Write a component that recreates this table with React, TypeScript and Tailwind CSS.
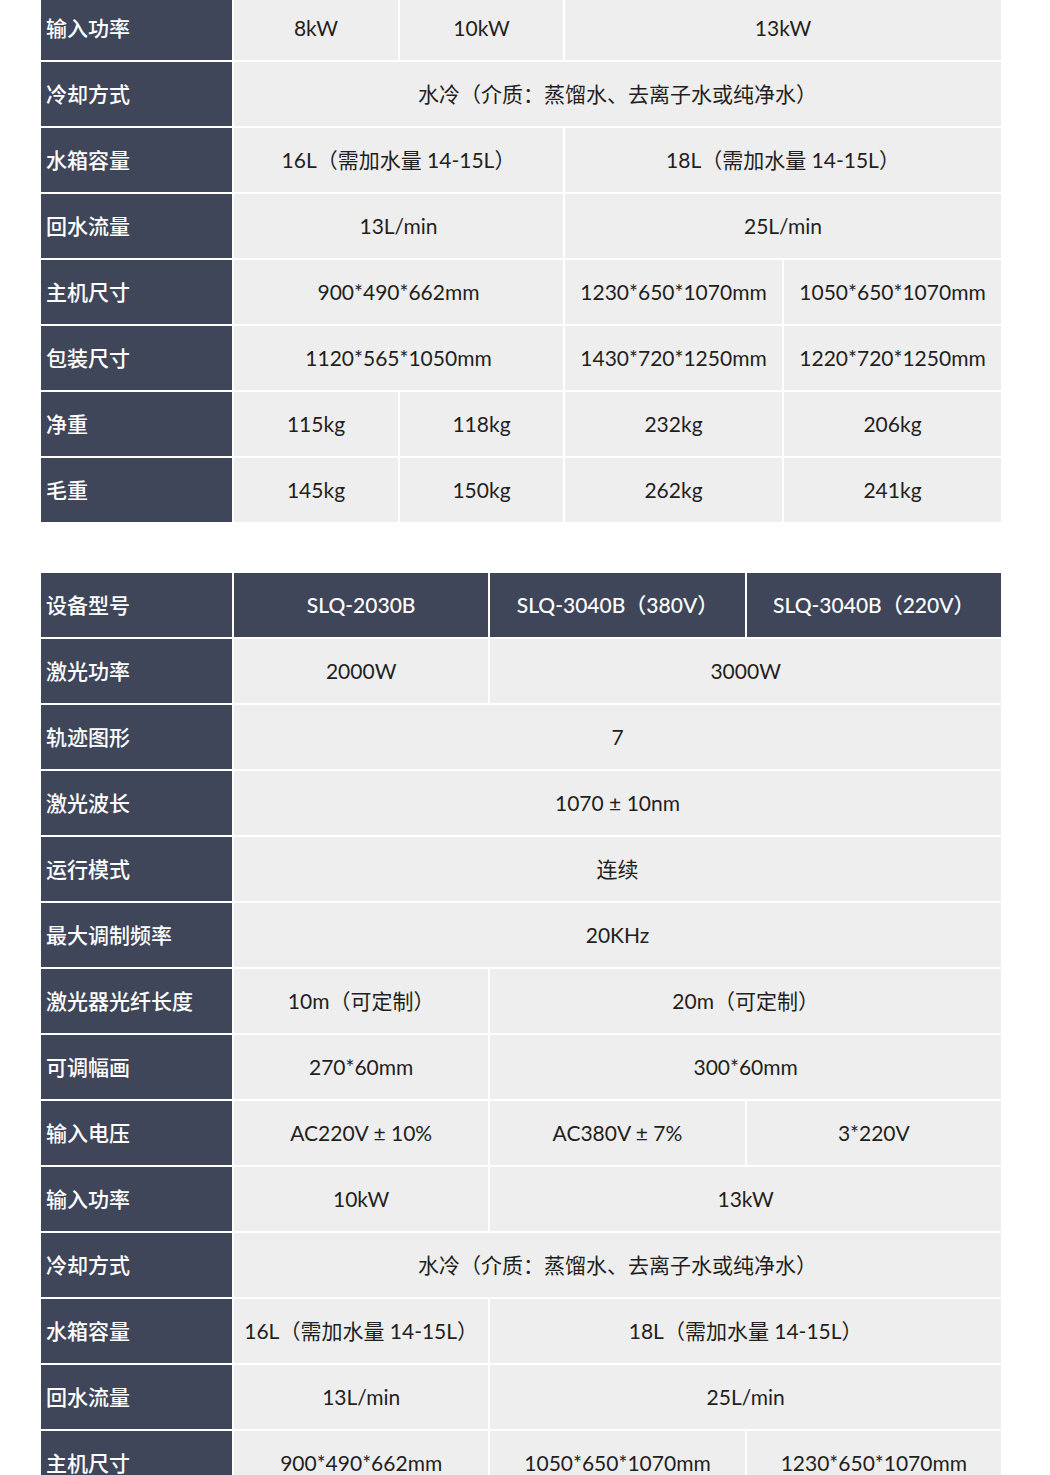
type Cell = { text: string; span: 1 | 2 | 3 | 4 }
type Row = { label: string; cells: Cell[] }

const spanClass: Record<number, string> = {
  1: "col-span-1",
  2: "col-span-2",
  3: "col-span-3",
  4: "col-span-4",
}

const c = (text: string, span: 1 | 2 | 3 | 4 = 1): Cell => ({ text, span })

const firstRows: Row[] = [
  { label: "输入功率", cells: [c("8kW"), c("10kW"), c("13kW", 2)] },
  { label: "冷却方式", cells: [c("水冷（介质：蒸馏水、去离子水或纯净水）", 4)] },
  { label: "水箱容量", cells: [c("16L（需加水量 14-15L）", 2), c("18L（需加水量 14-15L）", 2)] },
  { label: "回水流量", cells: [c("13L/min", 2), c("25L/min", 2)] },
  { label: "主机尺寸", cells: [c("900*490*662mm", 2), c("1230*650*1070mm"), c("1050*650*1070mm")] },
  { label: "包装尺寸", cells: [c("1120*565*1050mm", 2), c("1430*720*1250mm"), c("1220*720*1250mm")] },
  { label: "净重", cells: [c("115kg"), c("118kg"), c("232kg"), c("206kg")] },
  { label: "毛重", cells: [c("145kg"), c("150kg"), c("262kg"), c("241kg")] },
]

const secondRows: Row[] = [
  { label: "激光功率", cells: [c("2000W"), c("3000W", 2)] },
  { label: "轨迹图形", cells: [c("7", 3)] },
  { label: "激光波长", cells: [c("1070 ± 10nm", 3)] },
  { label: "运行模式", cells: [c("连续", 3)] },
  { label: "最大调制频率", cells: [c("20KHz", 3)] },
  { label: "激光器光纤长度", cells: [c("10m（可定制）"), c("20m（可定制）", 2)] },
  { label: "可调幅画", cells: [c("270*60mm"), c("300*60mm", 2)] },
  { label: "输入电压", cells: [c("AC220V ± 10%"), c("AC380V ± 7%"), c("3*220V")] },
  { label: "输入功率", cells: [c("10kW"), c("13kW", 2)] },
  { label: "冷却方式", cells: [c("水冷（介质：蒸馏水、去离子水或纯净水）", 3)] },
  { label: "水箱容量", cells: [c("16L（需加水量 14-15L）"), c("18L（需加水量 14-15L）", 2)] },
  { label: "回水流量", cells: [c("13L/min"), c("25L/min", 2)] },
  { label: "主机尺寸", cells: [c("900*490*662mm"), c("1050*650*1070mm"), c("1230*650*1070mm")] },
]

const font = { fontFamily: '"Lato", "Noto Sans CJK SC", sans-serif' }

function LabelCell({ text }: { text: string }) {
  return (
    <div className="flex h-16 items-center bg-[#3f465a] pl-[5px] text-[21px] font-medium text-white">
      {text}
    </div>
  )
}

function SpecRows({ rows }: { rows: Row[] }) {
  return (
    <>
      {rows.map((row, i) => (
        <div key={i} className="contents">
          <LabelCell text={row.label} />
          {row.cells.map((cell, j) => (
            <div
              key={j}
              className={`${spanClass[cell.span]} flex h-16 items-center justify-center bg-[#eeeeee] text-[21px] text-[#231f20]`}
            >
              {cell.text}
            </div>
          ))}
        </div>
      ))}
    </>
  )
}

export default function App() {
  return (
    <div className="h-[1475px] overflow-hidden bg-white" style={font}>
      <div className="ml-[41px] w-[960px]">
        {/* first table, top row cut by the page edge */}
        <div className="-mt-[4px] grid grid-cols-[191px_164px_163px_217px_217px] gap-[2px] bg-white">
          <SpecRows rows={firstRows} />
        </div>

        {/* second table */}
        <div className="mt-[51px] grid grid-cols-[191px_1fr_1fr_1fr] gap-[2px] bg-white">
          <LabelCell text="设备型号" />
          {["SLQ-2030B", "SLQ-3040B（380V）", "SLQ-3040B（220V）"].map((m) => (
            <div
              key={m}
              className="flex h-16 items-center justify-center bg-[#3f465a] text-[21px] font-medium text-white"
            >
              {m}
            </div>
          ))}
          <SpecRows rows={secondRows} />
        </div>
      </div>
    </div>
  )
}
